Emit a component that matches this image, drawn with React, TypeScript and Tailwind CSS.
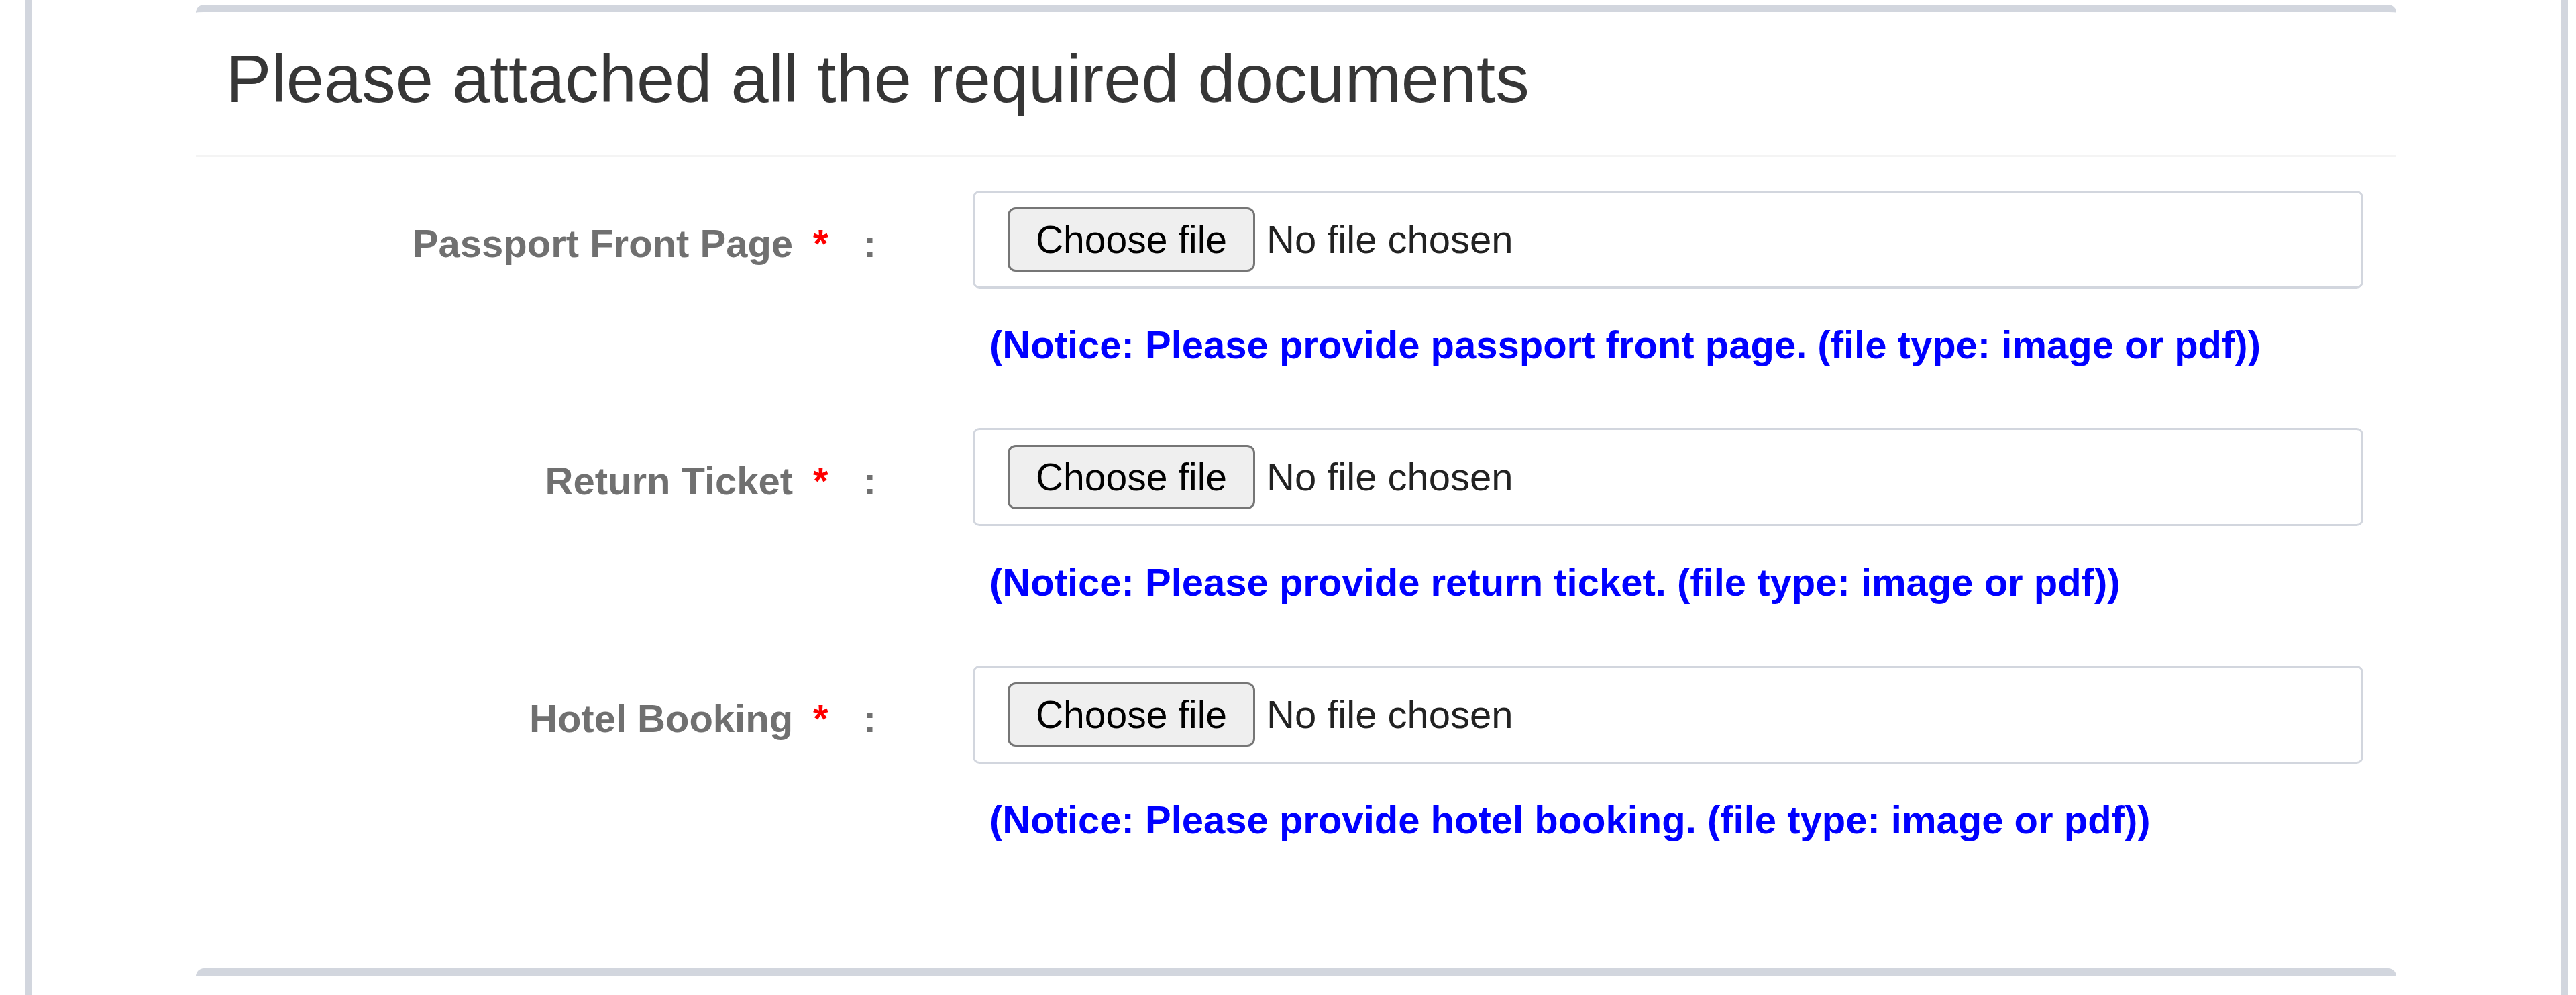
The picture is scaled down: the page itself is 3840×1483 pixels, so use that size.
import React from 'react';

interface DocumentField {
    id: string;
    label: string;
    notice: string;
}

const documents: DocumentField[] = [
    {
        id: 'passport',
        label: 'Passport Front Page',
        notice: '(Notice: Please provide passport front page. (file type: image or pdf))',
    },
    {
        id: 'ticket',
        label: 'Return Ticket',
        notice: '(Notice: Please provide return ticket. (file type: image or pdf))',
    },
    {
        id: 'hotel',
        label: 'Hotel Booking',
        notice: '(Notice: Please provide hotel booking. (file type: image or pdf))',
    },
];

const FileField: React.FC<{ field: DocumentField }> = ({ field }) => {
    return (
        <div className="flex">
            <label
                htmlFor={field.id}
                className="w-[1014px] shrink-0 pt-[37px] text-right text-[58px] leading-[83px] font-bold text-[#707070]"
            >
                {field.label}
                <span className="ml-[30px] text-[#ff0000]">*</span>
                <span className="ml-[52px]">:</span>
            </label>

            <div className="ml-[144px] w-[2073px]">
                {/* fake file input so the text stays the same in every locale */}
                <div className="flex h-[146px] items-center rounded-[10px] border-[3px] border-[#d2d6de] bg-white pl-[49px]">
                    <button
                        type="button"
                        id={field.id}
                        className="flex h-[96px] w-[369px] items-center justify-center rounded-[12px] border-[3px] border-[#767676] bg-[#efefef] text-[57px] leading-none text-black"
                    >
                        Choose file
                    </button>
                    <span className="ml-[17px] text-[58px] leading-none text-[#222222]">No file chosen</span>
                </div>
                <p className="mt-[42px] ml-[25px] text-[58px] leading-[83px] font-bold text-[#0000ff]">
                    {field.notice}
                </p>
            </div>
        </div>
    );
};

const App: React.FC = () => {
    return (
        <div className="h-[1483px] overflow-hidden bg-white font-[family-name:Liberation_Sans,Arial,Helvetica,sans-serif]">
            <div className="ml-[37px] mr-[12px] h-full border-x-[11px] border-[#d2d6de] pt-[7px] pl-[244px] pr-[245px]">
                <div className="rounded-[12px] border-t-[11px] border-[#d2d6de] bg-white pb-[97px]">
                    <div className="border-b-[3px] border-[#f4f4f4] pt-[44px] pb-[59px] pl-[45px]">
                        <h3 className="text-[101px] leading-[110px] text-[#363636]">
                            Please attached all the required documents
                        </h3>
                    </div>

                    <div className="flex flex-col gap-[83px] pt-[50px]">
                        {documents.map(field => (
                            <FileField key={field.id} field={field} />
                        ))}
                    </div>
                </div>

                {/* next box starts just below */}
                <div className="mt-[83px] h-[200px] rounded-[12px] border-t-[11px] border-[#d2d6de] bg-white"></div>
            </div>
        </div>
    );
};

export default App;
